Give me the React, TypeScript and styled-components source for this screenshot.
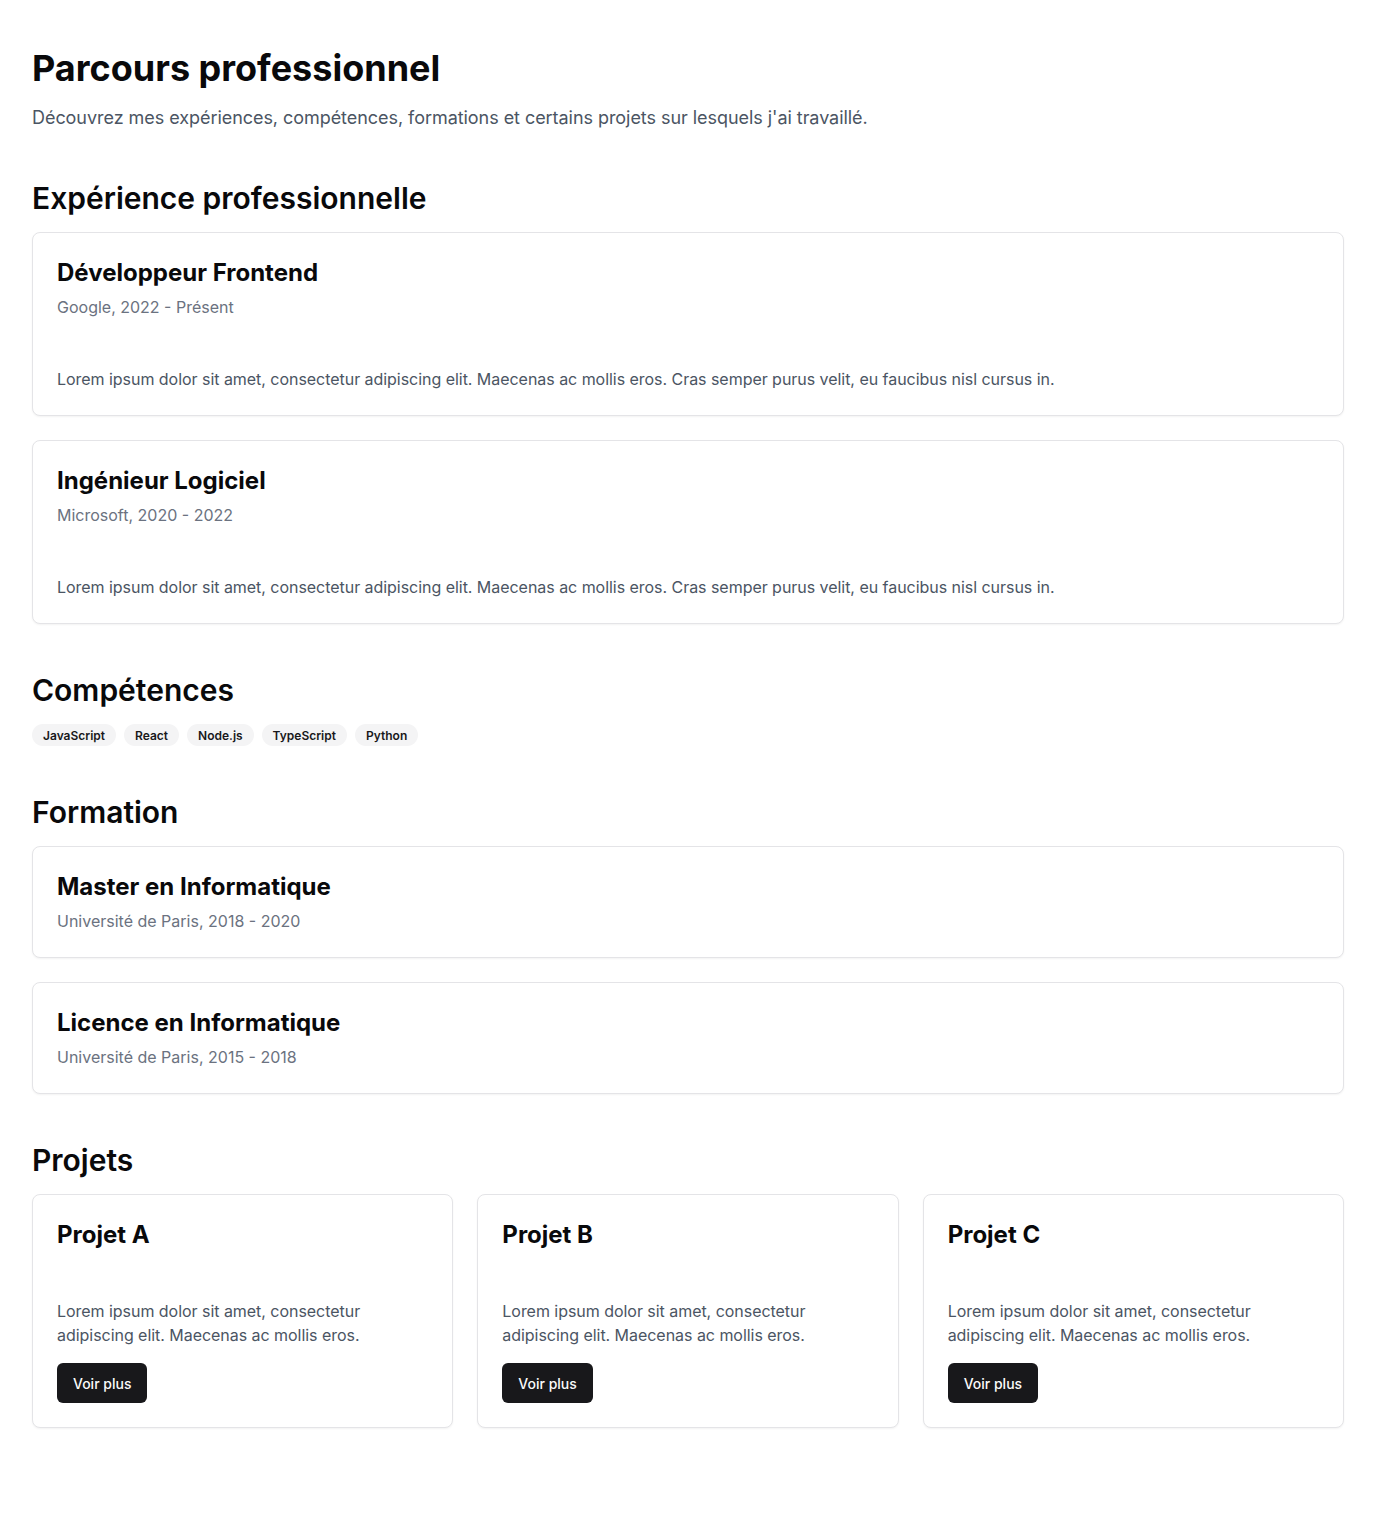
import React from "react";
import styled, { createGlobalStyle } from "styled-components";

const Global = createGlobalStyle`
  * { box-sizing: border-box; }
  body {
    margin: 0;
    background: #ffffff;
    font-family: Inter, "Noto Sans", sans-serif;
    color: #09090b;
    -webkit-font-smoothing: antialiased;
  }
  h1, h2, h3, p { margin: 0; }
`;

const Page = styled.main`
  padding: 48px 32px 96px;
  display: flex;
  flex-direction: column;
`;

const Title = styled.h1`
  font-size: 36px;
  line-height: 40px;
  font-weight: 700;
`;

const Lead = styled.p`
  margin-top: 16px;
  font-size: 18px;
  line-height: 28px;
  color: #4b5563;
  letter-spacing: -0.05px;
`;

const Section = styled.section`
  margin-top: 48px;
  display: flex;
  flex-direction: column;
  gap: 16px;
`;

const SectionTitle = styled.h2`
  font-size: 30px;
  line-height: 36px;
  font-weight: 600;
`;

const Stack = styled.div`
  display: flex;
  flex-direction: column;
  gap: 24px;
`;

const Grid = styled.div`
  display: grid;
  grid-template-columns: repeat(3, 1fr);
  gap: 24px;
`;

const Card = styled.div`
  border: 1px solid #e4e4e7;
  border-radius: 8px;
  background: #fff;
  box-shadow: 0 1px 2px rgba(0, 0, 0, 0.05);
  padding: 24px;
  display: flex;
  flex-direction: column;
`;

const CardTitle = styled.h3`
  font-size: 24px;
  line-height: 32px;
  font-weight: 700;
`;

const CardSub = styled.p`
  margin-top: 6px;
  font-size: 16px;
  line-height: 24px;
  color: #6b7280;
`;

const CardText = styled.p<{ $gap: number }>`
  margin-top: ${(p) => p.$gap}px;
  font-size: 16px;
  line-height: 24px;
  color: #4b5563;
  letter-spacing: -0.04px;
`;

const Badges = styled.div`
  display: flex;
  flex-wrap: wrap;
  gap: 8px;
`;

const Badge = styled.span`
  display: inline-flex;
  align-items: center;
  height: 22px;
  padding: 0 11px;
  border-radius: 999px;
  background: #f4f4f5;
  color: #18181b;
  font-size: 12px;
  font-weight: 600;
`;

const Button = styled.button`
  margin-top: 16px;
  align-self: flex-start;
  height: 40px;
  padding: 0 16px;
  border: none;
  border-radius: 6px;
  background: #18181b;
  color: #fafafa;
  font-family: Inter, sans-serif;
  font-size: 14px;
  font-weight: 500;
  cursor: pointer;
`;

const lorem =
  "Lorem ipsum dolor sit amet, consectetur adipiscing elit. Maecenas ac mollis eros. Cras semper purus velit, eu faucibus nisl cursus in.";
const loremShort =
  "Lorem ipsum dolor sit amet, consectetur adipiscing elit. Maecenas ac mollis eros.";

const experiences = [
  { title: "Développeur Frontend", sub: "Google, 2022 - Présent" },
  { title: "Ingénieur Logiciel", sub: "Microsoft, 2020 - 2022" },
];

const skills = ["JavaScript", "React", "Node.js", "TypeScript", "Python"];

const formations = [
  { title: "Master en Informatique", sub: "Université de Paris, 2018 - 2020" },
  { title: "Licence en Informatique", sub: "Université de Paris, 2015 - 2018" },
];

const projects = ["Projet A", "Projet B", "Projet C"];

export default function App() {
  return (
    <>
      <Global />
      <Page>
        <Title>Parcours professionnel</Title>
        <Lead>
          Découvrez mes expériences, compétences, formations et certains projets sur lesquels j'ai travaillé.
        </Lead>

        <Section>
          <SectionTitle>Expérience professionnelle</SectionTitle>
          <Stack>
            {experiences.map((e) => (
              <Card key={e.title}>
                <CardTitle>{e.title}</CardTitle>
                <CardSub>{e.sub}</CardSub>
                <CardText $gap={48}>{lorem}</CardText>
              </Card>
            ))}
          </Stack>
        </Section>

        <Section>
          <SectionTitle>Compétences</SectionTitle>
          <Badges>
            {skills.map((s) => (
              <Badge key={s}>{s}</Badge>
            ))}
          </Badges>
        </Section>

        <Section>
          <SectionTitle>Formation</SectionTitle>
          <Stack>
            {formations.map((f) => (
              <Card key={f.title}>
                <CardTitle>{f.title}</CardTitle>
                <CardSub>{f.sub}</CardSub>
              </Card>
            ))}
          </Stack>
        </Section>

        <Section>
          <SectionTitle>Projets</SectionTitle>
          <Grid>
            {projects.map((p) => (
              <Card key={p}>
                <CardTitle>{p}</CardTitle>
                <CardText $gap={48}>{loremShort}</CardText>
                <Button>Voir plus</Button>
              </Card>
            ))}
          </Grid>
        </Section>
      </Page>
    </>
  );
}
